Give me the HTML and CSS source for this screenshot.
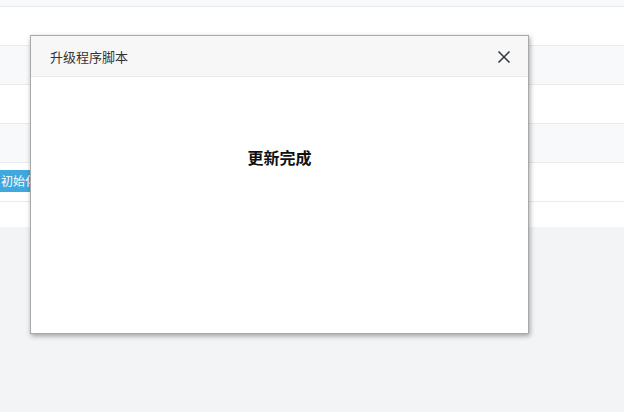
FILE: index.html
```html
<!DOCTYPE html>
<html lang="zh-CN">
<head>
<meta charset="utf-8">
<link rel="stylesheet" href="styles.css">
</head>
<body>
<div class="page">
  <div class="table">
    <div class="row row-top stripe"></div>
    <div class="row"></div>
    <div class="row stripe"></div>
    <div class="row"></div>
    <div class="row stripe"></div>
    <div class="row row-btn"><span class="btn">初始化</span></div>
    <div class="tail"></div>
  </div>
</div>
<div class="modal">
  <div class="modal-head">
    <span class="modal-title">升级程序脚本</span>
    <svg class="close" width="14" height="14" viewBox="0 0 14 14"><path d="M1.5 1.5 L12.5 12.5 M12.5 1.5 L1.5 12.5" stroke="#2f3542" stroke-width="1.5" fill="none"/></svg>
  </div>
  <div class="modal-body">
    <p class="msg">更新完成</p>
  </div>
</div>
</body>
</html>
```

FILE: styles.css
```css
html, body {
  margin: 0;
  padding: 0;
  height: 100%;
  background: #f3f4f6;
  font-family: "Noto Sans CJK SC", "Liberation Sans", sans-serif;
}
.page {
  background: #f3f4f6;
  height: 412px;
}
.table {
  background: #fff;
}
.row {
  height: 38px;
  border-bottom: 1px solid #e8eaec;
  display: flex;
  align-items: center;
}
.row-top {
  height: 6px;
}
.stripe {
  background: #f8f9fb;
}
.tail {
  height: 25px;
  background: #fff;
}
.btn {
  background: #3ea8df;
  color: #fff;
  font-size: 12px;
  height: 22px;
  line-height: 22px;
  padding: 0 8px 0 1px;
  margin-top: -2px;
}
.modal {
  position: absolute;
  left: 30px;
  top: 35px;
  width: 499px;
  height: 299px;
  background: #fff;
  box-sizing: border-box;
  border: 1px solid #a9a9a9;
  box-shadow: 1px 2px 5px rgba(0,0,0,0.35);
  display: flex;
  flex-direction: column;
}
.modal-head {
  height: 41px;
  box-sizing: border-box;
  background: #f7f7f7;
  border-bottom: 1px solid #e9e9e9;
  display: flex;
  align-items: center;
  justify-content: space-between;
  padding: 0 17px 0 19px;
}
.modal-title {
  font-size: 13px;
  color: #333;
}
.close {
  display: block;
  margin-top: 1px;
}
.modal-body {
  flex: 1;
  display: flex;
  justify-content: center;
}
.msg {
  margin: 68px 0 0;
  font-size: 16px;
  font-weight: bold;
  color: #111;
}
```
